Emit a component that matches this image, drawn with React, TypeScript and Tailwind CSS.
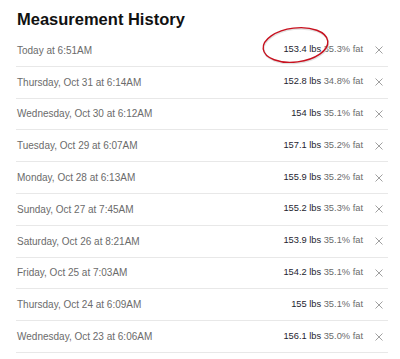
import React from 'react';

const rows = [
    {date: "Today at 6:51AM", lbs: "153.4", fat: "35.3"},
    {date: "Thursday, Oct 31 at 6:14AM", lbs: "152.8", fat: "34.8"},
    {date: "Wednesday, Oct 30 at 6:12AM", lbs: "154", fat: "35.1"},
    {date: "Tuesday, Oct 29 at 6:07AM", lbs: "157.1", fat: "35.2"},
    {date: "Monday, Oct 28 at 6:13AM", lbs: "155.9", fat: "35.2"},
    {date: "Sunday, Oct 27 at 7:45AM", lbs: "155.2", fat: "35.3"},
    {date: "Saturday, Oct 26 at 8:21AM", lbs: "153.9", fat: "35.1"},
    {date: "Friday, Oct 25 at 7:03AM", lbs: "154.2", fat: "35.1"},
    {date: "Thursday, Oct 24 at 6:09AM", lbs: "155", fat: "35.1"},
    {date: "Wednesday, Oct 23 at 6:06AM", lbs: "156.1", fat: "35.0"},
];

function DeleteIcon() {
    return (
        <svg width="8" height="8" viewBox="0 0 8 8" className="block">
            <path d="M0.5 0.5 L7.5 7.5 M7.5 0.5 L0.5 7.5" stroke="#a0a0a0" strokeWidth="1" fill="none" />
        </svg>
    )
}

// the hand drawn red circle around today's weight
function Highlight() {
    return (
        <svg className="absolute left-[258px] top-[22px] pointer-events-none" width="76" height="48" viewBox="0 0 76 48">
            <ellipse cx="38" cy="24" rx="32.5" ry="17" transform="rotate(-7 38 24)" fill="none" stroke="#d6d6d6" strokeWidth="2" opacity="0.7" />
            <ellipse cx="37.5" cy="23" rx="32.5" ry="17" transform="rotate(-7 37.5 23)" fill="none" stroke="#c8101e" strokeWidth="1.4" />
        </svg>
    )
}

export default function App() {
    return (
        <div className="relative w-[400px] h-[359px] bg-white pl-[16px] pr-[12px] overflow-hidden" style={{fontFamily: '"Liberation Sans", Arial, sans-serif'}}>
            <div className="h-[35px] pt-[9px] pl-[1px]">
                <h1 className="text-[16.5px] leading-[20px] font-bold text-[#111]">Measurement History</h1>
            </div>
            {rows.map((r) => (
                <div key={r.date} className="h-[31.8px] flex items-center justify-between border-b border-[#e8e8e8] pl-[1px]">
                    <span className="text-[10px] text-[#6b6b6b]">{r.date}</span>
                    <div className="flex items-center">
                        <span className="text-[9.3px] text-[#6b6b6b]">
                            <span className="text-[#1e2430]">{r.lbs} lbs</span> {r.fat}% fat
                        </span>
                        <div className="ml-[12px] mr-[5px]">
                            <DeleteIcon />
                        </div>
                    </div>
                </div>
            ))}
            <Highlight />
        </div>
    )
}
